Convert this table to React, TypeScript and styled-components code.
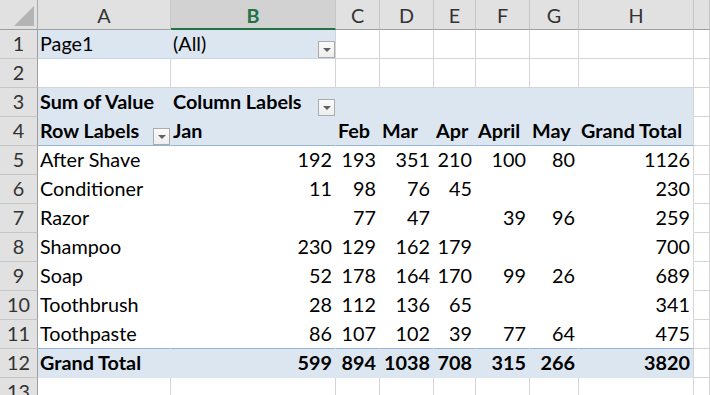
import React from 'react'
import styled, { createGlobalStyle } from 'styled-components'

const GRID = '#d4d4d4'
const PIVOT = '#dce6f1'
const PIVOT_LINE = '#95b3d7'
const HEAD_BG = '#e1e1e1'

const GlobalStyle = createGlobalStyle`
    html, body {
        margin: 0;
        padding: 0;
        background: #fff;
        overflow: hidden;
    }
    body {
        font-family: Lato, 'Liberation Sans', sans-serif;
        color: #000;
    }
`

const Sheet = styled.div`
    display: grid;
    grid-template-columns: 38px 133px 165px 44px 54px 42px 54px 49px 115px 1fr;
    grid-template-rows: 30px;
    grid-auto-rows: 29px;
    width: 710px;
    height: 395px;
    overflow: hidden;
    font-size: 19.8px;
`

const Corner = styled.div`
    position: relative;
    background: ${HEAD_BG};
    border-right: 1px solid #ababab;
    border-bottom: 1px solid #9e9e9e;
    &::after {
        content: '';
        position: absolute;
        left: 14px;
        top: 6px;
        width: 20px;
        height: 20px;
        background: #b4b4b4;
        clip-path: polygon(100% 0, 100% 100%, 0 100%);
    }
`

const ColHead = styled.div<{ $selected?: boolean }>`
    display: flex;
    align-items: center;
    justify-content: center;
    background: ${(p) => (p.$selected ? '#d2d2d2' : HEAD_BG)};
    color: ${(p) => (p.$selected ? '#217346' : '#333')};
    font-weight: ${(p) => (p.$selected ? 700 : 400)};
    border-right: 1px solid #c6c6c6;
    border-bottom: ${(p) => (p.$selected ? '2px solid #217346' : '1px solid #9e9e9e')};
    padding-top: 1px;
`

const RowHead = styled.div`
    display: flex;
    align-items: flex-end;
    justify-content: center;
    padding-bottom: 3px;
    background: ${HEAD_BG};
    color: #333;
    border-right: 1px solid #9e9e9e;
    border-bottom: 1px solid #c6c6c6;
`

const Cell = styled.div<{ $bg: string; $right: string; $bottom: string; $bold?: boolean; $num?: boolean }>`
    display: flex;
    align-items: flex-end;
    justify-content: ${(p) => (p.$num ? 'flex-end' : 'space-between')};
    padding: 0 3px 3px 2px;
    background: ${(p) => p.$bg};
    border-right: 1px solid ${(p) => p.$right};
    border-bottom: 1px solid ${(p) => p.$bottom};
    font-weight: ${(p) => (p.$bold ? 700 : 400)};
    white-space: nowrap;
    overflow: visible;
    min-width: 0;
`

const Dropdown = styled.span`
    display: flex;
    align-items: center;
    justify-content: center;
    box-sizing: border-box;
    width: 17px;
    height: 17px;
    margin: 0 -3px -3px auto;
    border: 1px solid #ababab;
    background: linear-gradient(#fafafa, #eeeeee);
    flex-shrink: 0;
    &::before {
        content: '';
        border-left: 4px solid transparent;
        border-right: 4px solid transparent;
        border-top: 4px solid #606060;
        margin-top: 1px;
    }
`

type CellData = {
    text?: string
    num?: boolean
    drop?: boolean
}

type RowData = {
    cells: CellData[]
    bg: string[]
    right: string[]
    bottom: string[]
    bold?: boolean
}

const months = ['Jan', 'Feb', 'Mar', 'Apr', 'April', 'May', 'Grand Total']

const data: [string, (number | null)[]][] = [
    ['After Shave', [192, 193, 351, 210, 100, 80, 1126]],
    ['Conditioner', [11, 98, 76, 45, null, null, 230]],
    ['Razor', [null, 77, 47, null, 39, 96, 259]],
    ['Shampoo', [230, 129, 162, 179, null, null, 700]],
    ['Soap', [52, 178, 164, 170, 99, 26, 689]],
    ['Toothbrush', [28, 112, 136, 65, null, null, 341]],
    ['Toothpaste', [86, 107, 102, 39, 77, 64, 475]],
]

const totals = [599, 894, 1038, 708, 315, 266, 3820]

const fill = <T,>(n: number, v: T): T[] => Array.from({ length: n }, () => v)

const buildRows = (): RowData[] => {
    const rows: RowData[] = []
    // row 1 - page field
    rows.push({
        cells: [{ text: 'Page1' }, { text: '(All)', drop: true }, ...fill(6, {})],
        bg: [PIVOT, PIVOT, ...fill(6, '#fff')],
        right: [PIVOT, GRID, ...fill(6, GRID)],
        bottom: ['#c5d5ea', '#c5d5ea', ...fill(6, GRID)],
    })
    // row 2
    rows.push({ cells: fill(8, {}), bg: fill(8, '#fff'), right: fill(8, GRID), bottom: fill(8, GRID) })
    // row 3
    rows.push({
        cells: [{ text: 'Sum of Value' }, { text: 'Column Labels', drop: true }, ...fill(6, {})],
        bg: fill(8, PIVOT),
        right: [...fill(7, PIVOT), GRID],
        bottom: fill(8, PIVOT),
        bold: true,
    })
    // row 4
    rows.push({
        cells: [{ text: 'Row Labels', drop: true }, ...months.map((m) => ({ text: m }))],
        bg: fill(8, PIVOT),
        right: [...fill(7, PIVOT), GRID],
        bottom: fill(8, PIVOT_LINE),
        bold: true,
    })
    data.forEach(([label, vals], i) => {
        const last = i === data.length - 1
        rows.push({
            cells: [{ text: label }, ...vals.map((v) => ({ text: v === null ? '' : String(v), num: true }))],
            bg: fill(8, '#fff'),
            right: [...fill(7, '#fff'), GRID],
            bottom: fill(8, last ? PIVOT_LINE : '#fff'),
        })
    })
    rows.push({
        cells: [{ text: 'Grand Total' }, ...totals.map((v) => ({ text: String(v), num: true }))],
        bg: fill(8, PIVOT),
        right: [...fill(7, PIVOT), GRID],
        bottom: fill(8, PIVOT),
        bold: true,
    })
    rows.push({ cells: fill(8, {}), bg: fill(8, '#fff'), right: fill(8, GRID), bottom: fill(8, GRID) })
    return rows
}

const letters = ['A', 'B', 'C', 'D', 'E', 'F', 'G', 'H']

export default function App() {
    const rows = buildRows()
    return (
        <>
            <GlobalStyle />
            <Sheet>
                <Corner />
                {letters.map((l) => (
                    <ColHead key={l} $selected={l === 'B'}>
                        {l}
                    </ColHead>
                ))}
                <ColHead />
                {rows.map((row, r) => (
                    <React.Fragment key={r}>
                        <RowHead>{r + 1}</RowHead>
                        {row.cells.map((c, i) => (
                            <Cell
                                key={i}
                                $bg={row.bg[i]}
                                $right={row.right[i]}
                                $bottom={row.bottom[i]}
                                $bold={row.bold}
                                $num={c.num}
                            >
                                {c.text && <span>{c.text}</span>}
                                {c.drop && <Dropdown />}
                            </Cell>
                        ))}
                        <Cell $bg="#fff" $right={GRID} $bottom={GRID} />
                    </React.Fragment>
                ))}
            </Sheet>
        </>
    )
}
